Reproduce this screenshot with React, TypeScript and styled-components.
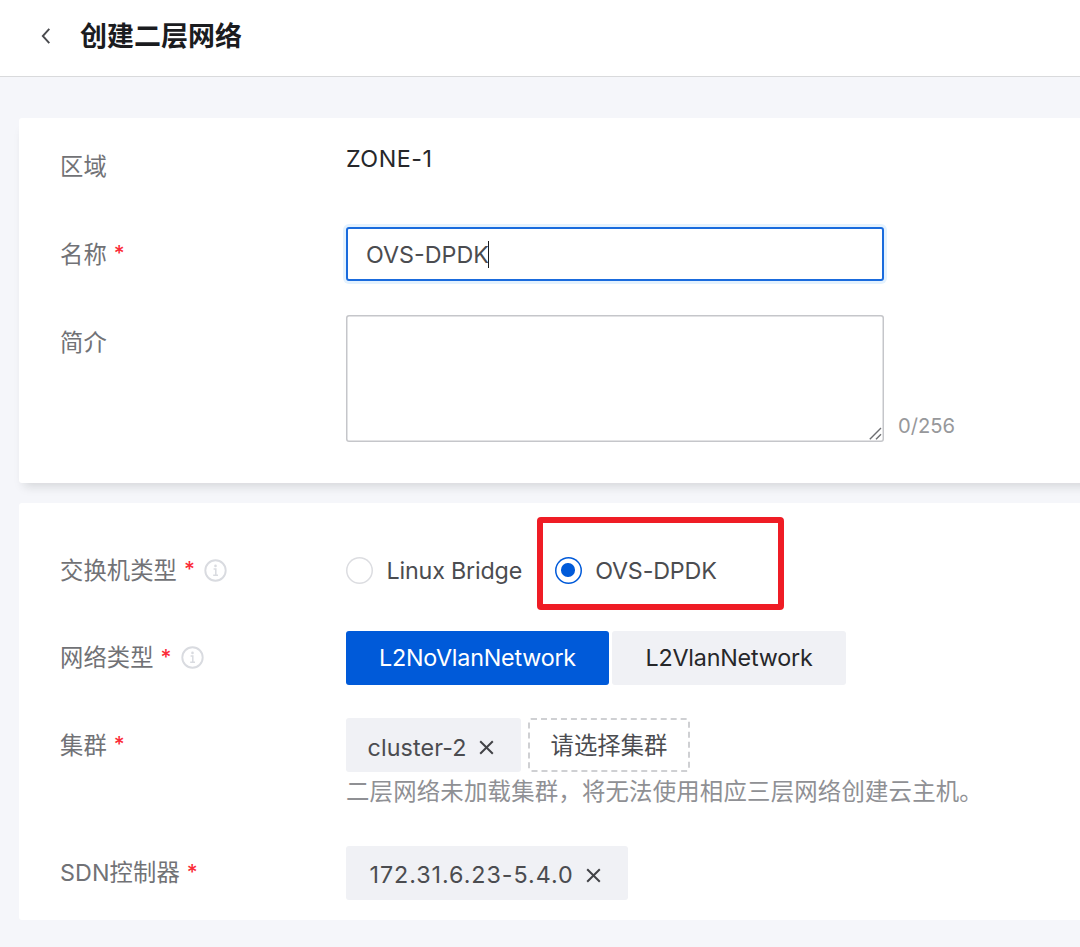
import React from "react";
import styled, { createGlobalStyle, css } from "styled-components";

const color = {
  page: "#f5f6fa",
  surface: "#ffffff",
  title: "#1b1c1f",
  label: "#717276",
  text: "#4b4c50",
  strong: "#26272a",
  muted: "#97989b",
  border: "#c5c6ca",
  fill: "#f0f1f5",
  primary: "#005ad9",
  danger: "#fb2c38",
  mark: "#ef1c25",
};

const GlobalStyle = createGlobalStyle`
  *, *::before, *::after { box-sizing: border-box; }
  body {
    margin: 0;
    background: ${color.page};
    color: ${color.text};
    font-family: Inter, "Noto Sans CJK SC", sans-serif;
    font-size: 23.3px;
    line-height: 1;
  }
`;

const Page = styled.div`
  display: flex;
  flex-direction: column;
  height: 947px;
  overflow: hidden;
`;

const Header = styled.header`
  display: flex;
  align-items: center;
  height: 77px;
  flex: none;
  padding: 0 0 4px 40px;
  background: ${color.surface};
  border-bottom: 1px solid #d9dadc;
`;

const BackButton = styled.button`
  display: flex;
  width: 12px;
  height: 18px;
  margin: 0 28px 1px 0;
  padding: 0;
  border: 0;
  background: none;
`;

const Title = styled.h1`
  margin: 2px 0 0;
  color: ${color.title};
  font-size: 27px;
  font-weight: 600;
  line-height: 40px;
`;

const Main = styled.main`
  display: flex;
  flex-direction: column;
  gap: 20px;
  padding: 41px 0 0 19px;
`;

const Card = styled.section<{ $raised?: boolean; $pad: string; $gap: number }>`
  display: flex;
  flex-direction: column;
  gap: ${(p) => p.$gap}px;
  margin-right: -16px;
  padding: ${(p) => p.$pad};
  background: ${color.surface};
  border-radius: 3px;
  ${(p) => p.$raised && css`box-shadow: 0 8px 10px -5px rgba(20, 24, 20, 0.15);`}
`;

const Row = styled.div`
  display: flex;
  align-items: flex-start;
`;

const LabelCell = styled.div`
  display: flex;
  align-items: center;
  flex: none;
  width: 286px;
  height: 54px;
  padding-top: 1px;
  color: ${color.label};
  letter-spacing: 0.1px;
  white-space: nowrap;
`;

const Required = styled.span`
  margin: 0 0 1px 7px;
  color: ${color.danger};
  font-size: 21px;
  font-weight: 500;
  line-height: 24px;
`;

const InfoSlot = styled.span`
  display: flex;
  margin: 0 0 1px 9px;
`;

const Control = styled.div<{ $gap?: number }>`
  display: flex;
  gap: ${(p) => p.$gap ?? 0}px;
`;

const Stack = styled.div`
  display: flex;
  flex-direction: column;
`;

const StaticValue = styled.div`
  color: ${color.strong};
  line-height: 39px;
  letter-spacing: 0.5px;
`;

const TextField = styled.div`
  display: flex;
  align-items: center;
  width: 538px;
  height: 54px;
  padding: 1px 0 0 18px;
  border: 2px solid #1a6bdd;
  border-radius: 3px;
  box-shadow: 0 0 0 3px #e4f2fe;
`;

const Caret = styled.span`
  width: 1px;
  height: 27px;
  margin-left: -1px;
  background: ${color.title};
`;

const TextArea = styled.div`
  display: flex;
  align-items: flex-end;
  justify-content: flex-end;
  width: 538px;
  height: 127px;
  box-shadow: inset 0 0 0 1.5px ${color.border};
  border-radius: 3px;
  padding: 0 2px 2px 0;
`;

const Counter = styled.span`
  align-self: flex-end;
  padding: 0 0 6px 14px;
  color: ${color.muted};
  font-size: 20.2px;
`;

const Option = styled.div`
  position: relative;
  display: flex;
  align-items: center;
  height: 54px;
  gap: 13.5px;
  letter-spacing: -0.18px;
  white-space: nowrap;
`;

const OptionText = styled.span`
  padding-top: 1px;
`;

const RadioDot = styled.span<{ $on?: boolean }>`
  display: flex;
  align-items: center;
  justify-content: center;
  flex: none;
  width: 27px;
  height: 27px;
  border-radius: 50%;
  box-shadow: inset 0 0 0 1.5px ${(p) => (p.$on ? color.primary : "#dcdde1")};

  &::after {
    content: "";
    width: 13.5px;
    height: 13.5px;
    border-radius: 50%;
    background: ${(p) => (p.$on ? color.primary : "transparent")};
  }
`;

const Highlight = styled.span`
  position: absolute;
  top: -26.5px;
  left: -18px;
  width: 247.5px;
  height: 93px;
  border: 6.5px solid ${color.mark};
  border-radius: 4px;
`;

const Segment = styled.button<{ $active?: boolean; $width: number }>`
  width: ${(p) => p.$width}px;
  height: 54px;
  padding: 0;
  border: 0;
  border-radius: 3px;
  background: ${(p) => (p.$active ? color.primary : color.fill)};
  color: ${(p) => (p.$active ? "#ffffff" : color.strong)};
  font: inherit;
  letter-spacing: -0.2px;
`;

const Tag = styled.div<{ $width: number; $spaced?: boolean }>`
  display: flex;
  align-items: center;
  gap: 12px;
  width: ${(p) => p.$width}px;
  height: 54px;
  padding: 5px 0 0 ${(p) => (p.$spaced ? 23.5 : 21.5)}px;
  border-radius: 3px;
  background: ${color.fill};
  white-space: nowrap;
  letter-spacing: ${(p) => (p.$spaced ? 0.95 : 0.12)}px;
`;

const PickButton = styled.button`
  display: flex;
  align-items: center;
  justify-content: center;
  width: 162px;
  height: 54px;
  padding: 2px 0 0;
  border: 2px dashed #cfd0d3;
  border-radius: 3px;
  background: none;
  color: ${color.text};
  font: inherit;
  letter-spacing: 0.1px;
`;

const Hint = styled.div`
  color: #8f9094;
  line-height: 40px;
  font-size: 23.4px;
  letter-spacing: 0.2px;
`;

const BackIcon = () => (
  <svg width="12" height="18" viewBox="0 0 12 18" fill="none" stroke="#4a4b4f" strokeWidth="1.9">
    <path d="M9.3 1.8 2.8 9l6.5 7.2" />
  </svg>
);

const InfoIcon = () => (
  <svg width="23" height="23" viewBox="0 0 23 23" fill="none" stroke="#d9dbe0">
    <circle cx="11.5" cy="11.5" r="10.2" strokeWidth="1.9" />
    <path d="M9.6 10h2.2v6M9.2 16.2h4.8" strokeWidth="1.5" />
    <circle cx="11.5" cy="6.9" r="1.3" fill="#d9dbe0" stroke="none" />
  </svg>
);

const CloseIcon = () => (
  <svg width="15" height="15" viewBox="0 0 15 15" fill="none" stroke="#424347" strokeWidth="2">
    <path d="m1.2 1.2 12.6 12.6M13.8 1.2 1.2 13.8" />
  </svg>
);

const ResizeGrip = () => (
  <svg width="13" height="13" viewBox="0 0 13 13" fill="none" stroke="#6d6e71" strokeWidth="1.4">
    <path d="M.8 12.2 12 1M7 12.2l5-5" />
  </svg>
);

interface FieldProps {
  label: string;
  required?: boolean;
  info?: boolean;
  children: React.ReactNode;
}

const Field = ({ label, required, info, children }: FieldProps) => (
  <Row>
    <LabelCell>
      {label}
      {required && <Required>*</Required>}
      {info && (
        <InfoSlot>
          <InfoIcon />
        </InfoSlot>
      )}
    </LabelCell>
    {children}
  </Row>
);

export default function App() {
  return (
    <Page>
      <GlobalStyle />
      <Header>
        <BackButton aria-label="返回">
          <BackIcon />
        </BackButton>
        <Title>创建二层网络</Title>
      </Header>
      <Main>
        <Card $raised $gap={34} $pad="21px 0 41px 41px">
          <Field label="区域">
            <StaticValue>ZONE-1</StaticValue>
          </Field>
          <Field label="名称" required>
            <TextField>
              OVS-DPDK
              <Caret />
            </TextField>
          </Field>
          <Field label="简介">
            <Control>
              <TextArea>
                <ResizeGrip />
              </TextArea>
              <Counter>0/256</Counter>
            </Control>
          </Field>
        </Card>
        <Card $gap={33.5} $pad="40px 0 20.5px 41px">
          <Field label="交换机类型" required info>
            <Control $gap={32.5}>
              <Option>
                <RadioDot />
                <OptionText>Linux Bridge</OptionText>
              </Option>
              <Option>
                <RadioDot $on />
                <OptionText>OVS-DPDK</OptionText>
                <Highlight />
              </Option>
            </Control>
          </Field>
          <Field label="网络类型" required info>
            <Control $gap={3}>
              <Segment $active $width={263}>L2NoVlanNetwork</Segment>
              <Segment $width={234}>L2VlanNetwork</Segment>
            </Control>
          </Field>
          <Field label="集群" required>
            <Stack>
              <Control $gap={7}>
                <Tag $width={175}>
                  cluster-2
                  <CloseIcon />
                </Tag>
                <PickButton>请选择集群</PickButton>
              </Control>
              <Hint>二层网络未加载集群，将无法使用相应三层网络创建云主机。</Hint>
            </Stack>
          </Field>
          <Field label="SDN控制器" required>
            <Tag $width={282} $spaced>
              172.31.6.23-5.4.0
              <CloseIcon />
            </Tag>
          </Field>
        </Card>
      </Main>
    </Page>
  );
}
